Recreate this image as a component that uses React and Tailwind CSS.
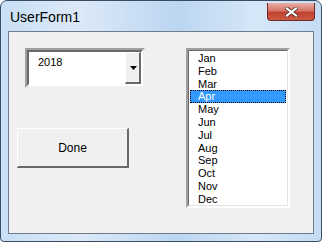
const months = ['Jan', 'Feb', 'Mar', 'Apr', 'May', 'Jun', 'Jul', 'Aug', 'Sep', 'Oct', 'Nov', 'Dec']

export default function App() {
  return (
    <div className="w-[322px] h-[242px] bg-white">
      {/* window frame */}
      <div
        className="w-[322px] h-[242px] flex flex-col rounded-t-[7px] rounded-b-[4px] border border-[#3b4d63] bg-[linear-gradient(90deg,#c9dff5_0%,#dbe9f8_25%,#bcd6f1_55%,#d6e7f8_80%,#c4dcf4_100%)]"
        style={{ fontFamily: '"Liberation Sans", Arial, sans-serif' }}
      >
        {/* title bar */}
        <div className="h-[30px] flex items-start justify-between">
          <span className="mt-[7px] ml-[9px] text-[14px] leading-[18px] text-black">UserForm1</span>
          <button className="mr-[6px] mt-[2px] w-[48px] h-[18px] flex items-center justify-center rounded-b-[4px] border border-t-0 border-[#6f2b23] bg-[linear-gradient(180deg,#e8b0a6_0%,#d8776a_45%,#c2432f_55%,#c95a45_100%)]">
            <svg width="13" height="10" viewBox="0 0 13 10">
              <path d="M2 1.5 L11 8.5 M11 1.5 L2 8.5" stroke="#4a2a28" strokeWidth="3.6" strokeLinecap="square" />
              <path d="M2 1.5 L11 8.5 M11 1.5 L2 8.5" stroke="#ffffff" strokeWidth="2.2" strokeLinecap="square" />
            </svg>
          </button>
        </div>

        {/* client area */}
        <div className="mx-[7px] h-[203px] border border-[#6f7c8c] bg-[#f0f0f0] flex">
          <div className="w-[177px] flex flex-col">
            {/* combobox */}
            <div className="ml-[16px] mt-[16px] w-[120px] h-[40px] flex border-2 border-t-[#a0a0a0] border-l-[#a0a0a0] border-r-[#f0f0f0] border-b-[#f0f0f0]">
              <div className="flex-1 flex border-2 border-t-[#696969] border-l-[#696969] border-r-white border-b-white bg-white">
                <span className="flex-1 pl-[9px] pt-[4px] text-[11px] leading-[13px] text-black">2018</span>
                <div className="w-[16px] flex items-center justify-center pl-[1px] bg-[#f0f0f0] border-l border-t border-white border-r-2 border-b-2 border-r-[#696969] border-b-[#696969]">
                  <svg width="7" height="4" viewBox="0 0 7 4">
                    <path d="M0 0 H7 L3.5 4 Z" fill="#000" />
                  </svg>
                </div>
              </div>
            </div>

            {/* Done button */}
            <button className="ml-[8px] mt-[40px] w-[112px] h-[40px] flex items-center justify-center bg-[#f0f0f0] border-t border-l border-white border-r-2 border-b-2 border-r-[#696969] border-b-[#696969] text-[12px] text-black">
              Done
            </button>
          </div>

          {/* listbox */}
          <div className="mt-[16px] w-[104px] h-[160px] border-2 border-t-[#a0a0a0] border-l-[#a0a0a0] border-r-white border-b-white">
            <div className="h-full border border-t-[#696969] border-l-[#696969] border-r-[#e3e3e3] border-b-[#e3e3e3] bg-white pt-[1px] pl-[1px] pr-[1px]">
              {months.map((m) =>
                m === 'Apr' ? (
                  <div
                    key={m}
                    className="h-[12.8px] pl-[7px] text-[11px] leading-[11px] text-white bg-[#3399ff] border border-dotted border-black"
                  >
                    {m}
                  </div>
                ) : (
                  <div key={m} className="h-[12.8px] pl-[8px] text-[11px] leading-[12.8px] text-black">
                    {m}
                  </div>
                )
              )}
            </div>
          </div>
        </div>
      </div>
    </div>
  )
}
